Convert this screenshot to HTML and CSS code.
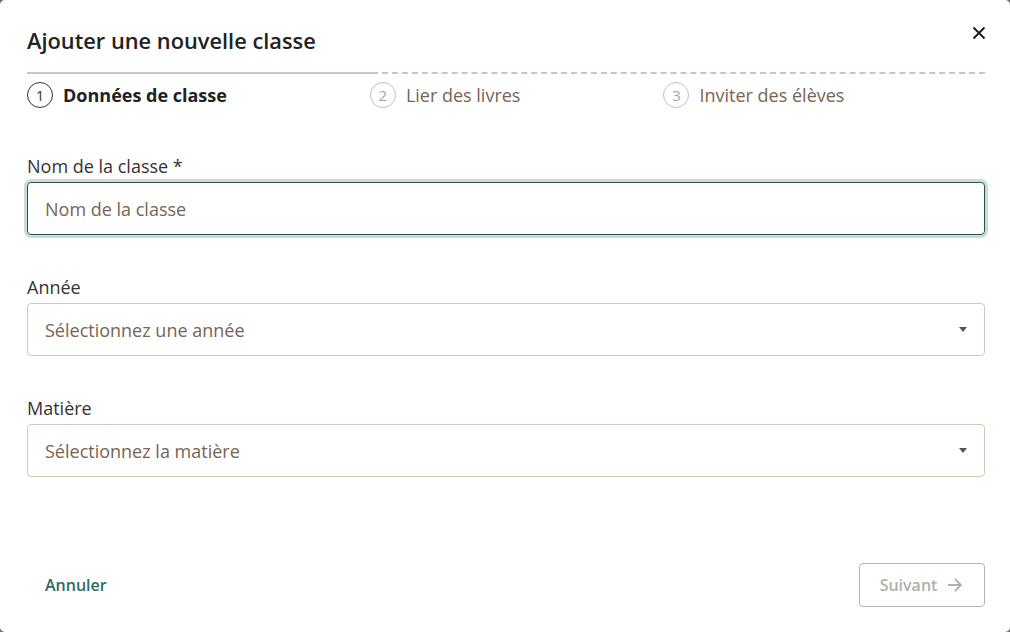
FILE: index.html
```html
<!DOCTYPE html>
<html lang="fr">
<head>
    <meta charset="UTF-8">
    <meta name="viewport" content="width=device-width, initial-scale=1.0">
    <title>Ajouter une nouvelle classe</title>
    <link rel="stylesheet" href="styles.css">
</head>
<body>
    <div class="modal">
        <!-- Header -->
        <div class="modal-header">
            <h1>Ajouter une nouvelle classe</h1>
            <button class="close-btn" aria-label="Fermer">
                <svg width="14" height="14" viewBox="0 0 14 14"><path d="M1.5 1.5 L12.5 12.5 M12.5 1.5 L1.5 12.5" stroke="#1f1f1f" stroke-width="2" fill="none"/></svg>
            </button>
        </div>

        <!-- Stepper -->
        <div class="stepper">
            <div class="stepper-line">
                <span class="line-done"></span>
                <span class="line-todo"></span>
            </div>
            <div class="steps">
                <div class="step active"><span class="step-num">1</span><span class="step-label">Données de classe</span></div>
                <div class="step"><span class="step-num">2</span><span class="step-label">Lier des livres</span></div>
                <div class="step"><span class="step-num">3</span><span class="step-label">Inviter des élèves</span></div>
            </div>
        </div>

        <!-- Form -->
        <form class="form">
            <div class="field">
                <label for="className">Nom de la classe *</label>
                <div class="input focused"><span class="placeholder">Nom de la classe</span></div>
            </div>
            <div class="field">
                <label>Année</label>
                <div class="input select"><span class="placeholder">Sélectionnez une année</span><span class="caret"></span></div>
            </div>
            <div class="field">
                <label>Matière</label>
                <div class="input select"><span class="placeholder">Sélectionnez la matière</span><span class="caret"></span></div>
            </div>
        </form>

        <!-- Footer -->
        <div class="modal-footer">
            <button class="link-btn">Annuler</button>
            <button class="next-btn" disabled>Suivant
                <svg width="18" height="16" viewBox="0 0 18 16"><path d="M2 8 H15 M9 2 L15 8 L9 14" stroke="#b3aeaa" stroke-width="1.8" fill="none"/></svg>
            </button>
        </div>
    </div>
</body>
</html>
```

FILE: styles.css
```css
* { box-sizing: border-box; }
html, body { height: 100%; }
body {
    margin: 0;
    background-color: #6f6f6f;
    font-family: "Open Sans", "Noto Sans", sans-serif;
    color: #2b2b2b;
}
.modal {
    background-color: #ffffff;
    border-radius: 5px;
    height: 632px;
    padding: 0 25px 0 27px;
    display: flex;
    flex-direction: column;
}
.modal-header {
    display: flex;
    justify-content: space-between;
    align-items: center;
    padding-top: 26px;
    height: 55px;
}
h1 {
    margin: 0;
    font-size: 21.8px;
    font-weight: 600;
    color: #222;
}
.close-btn {
    background: none;
    border: none;
    padding: 0;
    margin-top: -16px;
    margin-right: -1px;
    cursor: pointer;
    display: flex;
}
.stepper { margin-top: 17px; }
.stepper-line { display: flex; height: 2px; }
.line-done { width: 345px; background-color: #d4c3b3; }
.line-todo {
    flex: 1;
    border-top: 2px dashed #d4c3b3;
}
.steps {
    display: flex;
    gap: 143px;
    margin-top: 8px;
}
.step {
    display: flex;
    align-items: center;
    gap: 10px;
    font-size: 18px;
    line-height: 26px;
    color: #7a6352;
}
.step-num {
    width: 26px;
    height: 26px;
    border-radius: 50%;
    border: 1px solid #c4c0bd;
    color: #a8a4a1;
    font-size: 15px;
    font-weight: 400;
    display: flex;
    align-items: center;
    justify-content: center;
}
.step.active { color: #222; font-weight: 700; }
.step.active .step-num { border-color: #333; color: #333; }
.form {
    margin-top: 46px;
    display: flex;
    flex-direction: column;
    gap: 40px;
}
.field label {
    display: block;
    font-size: 18px;
    line-height: 24px;
    color: #333;
    margin-bottom: 4px;
}
.input {
    height: 53px;
    border: 1px solid #d8c6b5;
    border-radius: 4px;
    padding: 0 17px;
    display: flex;
    align-items: center;
    justify-content: space-between;
}
.input.focused {
    border-color: #2b4f4a;
    box-shadow: 0 0 0 3px #cadcd9;
}
.placeholder { font-size: 18px; color: #7a6352; }
.caret {
    width: 0;
    height: 0;
    border-left: 4px solid transparent;
    border-right: 4px solid transparent;
    border-top: 5px solid #555;
}
.modal-footer {
    margin-top: auto;
    margin-bottom: 25px;
    display: flex;
    justify-content: space-between;
    align-items: center;
}
.link-btn {
    background: none;
    border: none;
    font-family: inherit;
    font-size: 16px;
    font-weight: 600;
    color: #2e6b66;
    padding: 0 18px;
    cursor: pointer;
}
.next-btn {
    height: 44px;
    width: 126px;
    background: #fff;
    border: 1px solid #b7b3b0;
    border-radius: 4px;
    font-family: inherit;
    font-size: 16px;
    font-weight: 600;
    color: #b3aeaa;
    display: flex;
    align-items: center;
    justify-content: center;
    gap: 9px;
}
```
